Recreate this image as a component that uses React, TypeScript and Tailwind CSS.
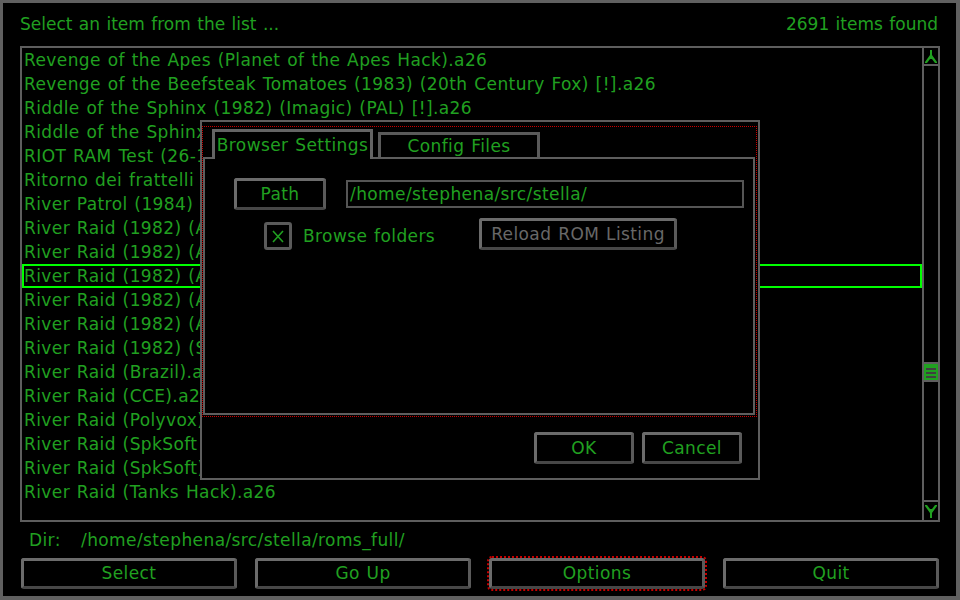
import React from "react";

const ROWS = [
  "Revenge of the Apes (Planet of the Apes Hack).a26",
  "Revenge of the Beefsteak Tomatoes (1983) (20th Century Fox) [!].a26",
  "Riddle of the Sphinx (1982) (Imagic) (PAL) [!].a26",
  "Riddle of the Sphinx (1982) (Imagic) [!].a26",
  "RIOT RAM Test (26-1-2002) (Eckhard Stolberg).a26",
  "Ritorno dei frattelli di Mario (Mario Bros Hack).a26",
  "River Patrol (1984) (Tigervision).a26",
  "River Raid (1982) (Activision) [!].a26",
  "River Raid (1982) (Activision) (PAL) [!].a26",
  "River Raid (1982) (Activision) [a1].a26",
  "River Raid (1982) (Activision) [a2].a26",
  "River Raid (1982) (Activision) [h1].a26",
  "River Raid (1982) (Star Game).a26",
  "River Raid (Brazil).a26",
  "River Raid (CCE).a26",
  "River Raid (Polyvox).a26",
  "River Raid (SpkSoft 1984) (PAL).a26",
  "River Raid (SpkSoft) [!].a26",
  "River Raid (Tanks Hack).a26",
];

const SELECTED = 9;

function Btn({
  label,
  className = "",
  disabled = false,
}: {
  label: string;
  className?: string;
  disabled?: boolean;
}) {
  return (
    <div
      className={
        "flex items-center justify-center rounded-[3px] border-[3px] border-t-[#6b6b6b] border-l-[#6b6b6b] border-r-[#5a5a5a] border-b-[#474747] bg-black " +
        (disabled ? "text-[#686868] " : "text-[#20a020] ") +
        className
      }
    >
      {label}
    </div>
  );
}

function UpArrow() {
  return (
    <svg width="12" height="13" viewBox="0 0 12 13">
      <polygon
        points="5,0 7,0 7,5 12,12 12,13 10,13 7,9 5,9 2,13 0,13 0,12 5,5"
        fill="#20a020"
      />
    </svg>
  );
}

function DownArrow() {
  return (
    <svg width="12" height="13" viewBox="0 0 12 13">
      <polygon
        points="0,0 2,0 5,4 7,4 10,0 12,0 12,1 7,8 7,13 5,13 5,8 0,1"
        fill="#20a020"
      />
    </svg>
  );
}

function Scrollbar() {
  return (
    <div className="flex w-[16px] flex-col border-l-2 border-[#5e5e5e]">
      <div className="flex h-[18px] items-center justify-center border-b-2 border-[#5e5e5e]">
        <UpArrow />
      </div>
      <div className="flex flex-1 flex-col">
        <div className="mt-[296px] flex h-[20px] flex-col items-center gap-[2px] border-y-2 border-[#5e5e5e] bg-[#20a020] pt-[4px]">
          <div className="h-[2px] w-[10px] bg-[#404040]" />
          <div className="h-[2px] w-[10px] bg-[#404040]" />
          <div className="h-[2px] w-[10px] bg-[#404040]" />
        </div>
      </div>
      <div className="flex h-[20px] items-center justify-center border-t-2 border-[#5e5e5e]">
        <DownArrow />
      </div>
    </div>
  );
}

function OptionsDialog() {
  return (
    <div className="absolute left-[197px] top-[117px] h-[360px] w-[560px] border-2 border-[#5e5e5e] bg-black">
      {/* focused tab widget: 1px dotted red frame */}
      <div className="mt-[4px] flex h-[291px] w-[555px] flex-col p-px [background:repeating-linear-gradient(90deg,#c80000_0_1px,transparent_1px_2px)_top/100%_1px_no-repeat,repeating-linear-gradient(90deg,#c80000_0_1px,transparent_1px_2px)_bottom/100%_1px_no-repeat,repeating-linear-gradient(180deg,#c80000_0_1px,transparent_1px_2px)_left/1px_100%_no-repeat,repeating-linear-gradient(180deg,#c80000_0_1px,transparent_1px_2px)_right/1px_100%_no-repeat]">
        <div className="flex h-[30px] items-end pl-[9px]">
          <div className="relative z-10 -mb-[2px] flex h-[30px] w-[161px] items-center justify-center border-x-[3px] border-t-[3px] border-[#646464] bg-black pb-[1px]">
            Browser Settings
          </div>
          <div className="ml-[5px] flex h-[25px] w-[162px] items-center justify-center border-x-[3px] border-t-[3px] border-[#5a5a5a]">
            Config Files
          </div>
        </div>
        <div className="h-[258px] w-[552px] border-2 border-[#5e5e5e]">
          <div className="mt-[19px] flex items-start">
            <Btn label="Path" className="ml-[29px] h-[32px] w-[92px]" />
            <div className="ml-[20px] mt-[2px] flex h-[28px] w-[398px] items-center border-2 border-[#555555] pl-[2px]">
              /home/stephena/src/stella/
            </div>
          </div>
          <div className="mt-[8px] flex items-start">
            <div className="ml-[59px] mt-[4px] flex h-[28px] w-[28px] items-center justify-center rounded-[3px] border-[3px] border-[#5a5a5a]">
              <svg width="12" height="13" viewBox="0 0 12 13">
                <path d="M1 1 L11 12 M11 1 L1 12" stroke="#20a020" strokeWidth="1.6" fill="none" />
              </svg>
            </div>
            <div className="ml-[11px] flex h-[36px] w-[176px] items-center">Browse folders</div>
            <Btn label="Reload ROM Listing" disabled className="h-[32px] w-[198px]" />
          </div>
        </div>
      </div>
      <div className="mt-[15px] flex justify-end gap-[8px] pr-[16px]">
        <Btn label="OK" className="h-[32px] w-[100px]" />
        <Btn label="Cancel" className="h-[32px] w-[100px]" />
      </div>
    </div>
  );
}

export default function App() {
  return (
    <div className="h-[600px] w-[960px] overflow-hidden bg-black font-['DejaVu_Sans',sans-serif] text-[17px] leading-none tracking-[0.4px] text-[#20a020] [word-spacing:1px]">
      <div className="relative flex h-full w-full flex-col border-b-[4px] border-l-[3px] border-r-[4px] border-t-[3px] border-[#606060]">
        <div className="flex h-[43px] items-center justify-between pl-[17px] pr-[18px] tracking-normal">
          <span>Select an item from the list ...</span>
          <span>2691 items found</span>
        </div>
        <div className="ml-[17px] flex h-[476px] w-[920px] border-2 border-[#5e5e5e]">
          <div className="flex w-[900px] flex-col overflow-hidden">
            {ROWS.map((r, i) => (
              <div
                key={i}
                className={
                  "flex h-[24px] shrink-0 items-center whitespace-nowrap " +
                  (i === SELECTED ? "border-2 border-[#00ff00]" : "pl-[2px]")
                }
              >
                {r}
              </div>
            ))}
          </div>
          <Scrollbar />
        </div>
        <div className="flex h-[36px] items-center pl-[26px]">
          <span className="w-[52px]">Dir:</span>
          <span>/home/stephena/src/stella/roms_full/</span>
        </div>
        <div className="flex gap-[18px] pl-[18px]">
          <Btn label="Select" className="h-[31px] w-[216px]" />
          <Btn label="Go Up" className="h-[31px] w-[216px]" />
          <Btn
            label="Options"
            className="h-[31px] w-[216px] outline-2 outline-offset-0 outline-dotted outline-[#c80000]"
          />
          <Btn label="Quit" className="h-[31px] w-[216px]" />
        </div>
        <OptionsDialog />
      </div>
    </div>
  );
}
